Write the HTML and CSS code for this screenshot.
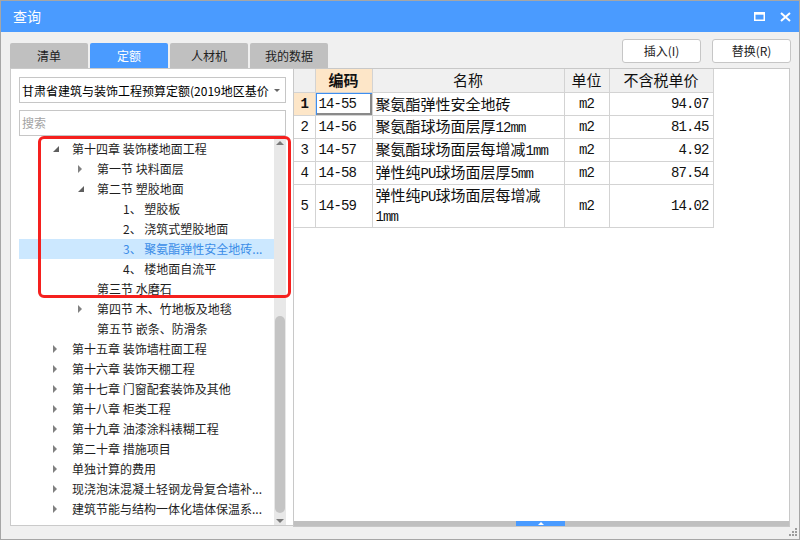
FILE: index.html
```html
<!DOCTYPE html>
<html lang="zh-CN">
<head>
<meta charset="utf-8">
<title>查询</title>
<link rel="stylesheet" href="styles.css">
</head>
<body>
<div class="window">
  <div class="titlebar">
    <span class="title">查询</span>
    <div class="ctrls">
      <svg width="11" height="9" viewBox="0 0 11 9"><path d="M0.75 1.5 H10.25 V8.25 H0.75 Z" fill="none" stroke="#fff" stroke-width="1.5"/><rect x="0" y="0" width="11" height="2.6" fill="#fff"/></svg>
      <svg width="11" height="10" viewBox="0 0 11 10"><path d="M1 1 L10 9 M10 1 L1 9" stroke="#fff" stroke-width="2"/></svg>
    </div>
  </div>

  <div class="toolbar">
    <div class="tabs">
      <div class="tab">清单</div>
      <div class="tab active">定额</div>
      <div class="tab">人材机</div>
      <div class="tab">我的数据</div>
    </div>
    <div class="btns">
      <div class="btn">插入(I)</div>
      <div class="btn">替换(R)</div>
    </div>
  </div>

  <div class="main">
    <div class="left">
      <div class="select"><span class="sel-text">甘肃省建筑与装饰工程预算定额(2019地区基价)</span><span class="caret"></span></div>
      <div class="search">搜索</div>
      <div class="tree">
        <div class="rows">
          <div class="row l0"><span class="tw e"></span>第十四章 装饰楼地面工程</div>
          <div class="row l1"><span class="tw c"></span>第一节 块料面层</div>
          <div class="row l1"><span class="tw e"></span>第二节 塑胶地面</div>
          <div class="row l2"><span class="tw"></span>1、 塑胶板</div>
          <div class="row l2"><span class="tw"></span>2、 浇筑式塑胶地面</div>
          <div class="row l2 sel"><span class="tw"></span>3、 聚氨酯弹性安全地砖...</div>
          <div class="row l2"><span class="tw"></span>4、 楼地面自流平</div>
          <div class="row l1"><span class="tw"></span>第三节 水磨石</div>
          <div class="row l1"><span class="tw c"></span>第四节 木、竹地板及地毯</div>
          <div class="row l1"><span class="tw"></span>第五节 嵌条、防滑条</div>
          <div class="row l0"><span class="tw c"></span>第十五章 装饰墙柱面工程</div>
          <div class="row l0"><span class="tw c"></span>第十六章 装饰天棚工程</div>
          <div class="row l0"><span class="tw c"></span>第十七章 门窗配套装饰及其他</div>
          <div class="row l0"><span class="tw c"></span>第十八章 柜类工程</div>
          <div class="row l0"><span class="tw c"></span>第十九章 油漆涂料裱糊工程</div>
          <div class="row l0"><span class="tw c"></span>第二十章 措施项目</div>
          <div class="row l0"><span class="tw c"></span>单独计算的费用</div>
          <div class="row l0"><span class="tw c"></span>现浇泡沫混凝土轻钢龙骨复合墙补...</div>
          <div class="row l0"><span class="tw c"></span>建筑节能与结构一体化墙体保温系...</div>
        </div>
        <div class="vscroll">
          <span class="arrow up"></span>
          <div class="track"><div class="thumb"></div></div>
          <span class="arrow down"></span>
        </div>
      </div>
      <div class="redbox"></div>
    </div>

    <div class="right">
      <div class="grid">
        <table>
          <colgroup><col class="c-no"><col class="c-code"><col class="c-name"><col class="c-unit"><col class="c-price"></colgroup>
          <thead>
            <tr><th class="no"></th><th class="hl">编码</th><th>名称</th><th>单位</th><th>不含税单价</th></tr>
          </thead>
          <tbody>
            <tr><td class="no hl">1</td><td class="code cur">14-55</td><td class="name">聚氨酯弹性安全地砖</td><td class="unit">m2</td><td class="price">94.07</td></tr>
            <tr><td class="no">2</td><td class="code">14-56</td><td class="name">聚氨酯球场面层厚<span class="ln">12mm</span></td><td class="unit">m2</td><td class="price">81.45</td></tr>
            <tr><td class="no">3</td><td class="code">14-57</td><td class="name">聚氨酯球场面层每增减<span class="ln">1mm</span></td><td class="unit">m2</td><td class="price">4.92</td></tr>
            <tr><td class="no">4</td><td class="code">14-58</td><td class="name">弹性纯<span class="ln">PU</span>球场面层厚<span class="ln">5mm</span></td><td class="unit">m2</td><td class="price">87.54</td></tr>
            <tr class="tall"><td class="no">5</td><td class="code">14-59</td><td class="name">弹性纯<span class="ln">PU</span>球场面层每增减<span class="ln">1mm</span></td><td class="unit">m2</td><td class="price">14.02</td></tr>
          </tbody>
        </table>
      </div>
      <div class="splitter"><span class="handle"></span></div>
    </div>
  </div>

  <svg class="grip" width="9" height="9" viewBox="0 0 9 9"><g fill="#9c9c9c"><rect x="6" y="0" width="2" height="2"/><rect x="3" y="3" width="2" height="2"/><rect x="6" y="3" width="2" height="2"/><rect x="0" y="6" width="2" height="2"/><rect x="3" y="6" width="2" height="2"/><rect x="6" y="6" width="2" height="2"/></g></svg>
</div>
</body>
</html>
```

FILE: styles.css
```css
* { box-sizing: border-box; }
html, body { margin: 0; padding: 0; }
body {
  width: 800px;
  height: 540px;
  overflow: hidden;
  background: #f0f0f0;
  font-family: "Noto Sans CJK SC", "Microsoft YaHei", sans-serif;
}

.window {
  position: relative;
  width: 800px;
  height: 540px;
  border: 1px solid #a6a6a6;
  background: #f0f0f0;
  display: flex;
  flex-direction: column;
}

/* title bar */
.titlebar {
  flex: none;
  height: 31px;
  background: #4a9bff;
  color: #fff;
  display: flex;
  align-items: center;
  justify-content: space-between;
  padding: 0 8px 0 12px;
}
.title { font-size: 14px; line-height: 31px; }
.ctrls { display: flex; align-items: center; gap: 15px; }
.ctrls svg { display: block; }

/* toolbar */
.toolbar {
  flex: none;
  height: 36px;
  display: flex;
  justify-content: space-between;
  padding: 0 8px 0 9px;
}
.tabs { display: flex; gap: 2px; align-self: flex-end; }
.tab {
  width: 78px;
  height: 25px;
  background: #c0c0c0;
  border-radius: 2px 2px 0 0;
  font-size: 12px;
  line-height: 25px;
  text-align: center;
  color: #222;
}
.tab.active { background: #4a9bff; color: #fff; }
.btns { display: flex; gap: 11px; padding-top: 7px; }
.btn {
  width: 79px;
  height: 24px;
  background: #fff;
  border: 1px solid #c6c6c6;
  border-radius: 3px;
  font-size: 12px;
  line-height: 22px;
  text-align: center;
  color: #222;
}

/* main area */
.main {
  flex: 1;
  display: flex;
  align-items: flex-start;
  padding: 0 8px 0 9px;
}
.left {
  position: relative;
  width: 283px;
  height: 458px;
  border: 1px solid #cacaca;
  border-right: none;
  background: #fff;
  display: flex;
  flex-direction: column;
  padding: 8px 7px 0 8px;
}
.select {
  flex: none;
  height: 26px;
  border: 1px solid #c6c6c6;
  display: flex;
  align-items: center;
  padding-left: 2px;
}
.sel-text {
  flex: 1;
  overflow: hidden;
  white-space: nowrap;
  font-size: 12px;
  color: #000;
}
.caret {
  flex: none;
  width: 16px;
  display: flex;
  justify-content: center;
  align-items: center;
}
.caret::before {
  content: "";
  border-top: 3px solid #666;
  border-left: 3px solid transparent;
  border-right: 3px solid transparent;
}
.search {
  flex: none;
  height: 26px;
  margin-top: 7px;
  border: 1px solid #c6c6c6;
  padding-left: 2px;
  font-size: 12px;
  line-height: 24px;
  color: #a3a3a3;
}

/* tree */
.tree {
  flex: 1;
  min-height: 0;
  margin-top: 3px;
  display: flex;
}
.rows { flex: 1; overflow: hidden; }
.row {
  height: 20px;
  line-height: 20px;
  font-size: 12px;
  color: #1e1e1e;
  white-space: nowrap;
  display: flex;
  align-items: center;
}
.row.l0 { padding-left: 34px; }
.row.l1 { padding-left: 59px; }
.row.l2 { padding-left: 85px; }
.row.sel { background: #cce8ff; color: #3b8de8; }
.tw { flex: none; width: 19px; height: 20px; position: relative; }
.tw.c::before {
  content: "";
  position: absolute;
  left: 0;
  top: 6px;
  border-left: 4px solid #808080;
  border-top: 4px solid transparent;
  border-bottom: 4px solid transparent;
}
.tw.e::before {
  content: "";
  position: absolute;
  left: 0;
  top: 7px;
  border-bottom: 6px solid #5f5f5f;
  border-left: 6px solid transparent;
}

.vscroll {
  flex: none;
  width: 12px;
  background: #e8e8e8;
  display: flex;
  flex-direction: column;
  align-items: center;
}
.arrow { flex: none; height: 12px; width: 12px; display: flex; justify-content: center; }
.arrow.up { align-items: flex-start; padding-top: 2px; }
.arrow.down { align-items: flex-end; padding-bottom: 2px; }
.arrow.up::before {
  content: "";
  border-bottom: 4px solid #7a7a7a;
  border-left: 4px solid transparent;
  border-right: 4px solid transparent;
}
.arrow.down::before {
  content: "";
  border-top: 4px solid #7a7a7a;
  border-left: 4px solid transparent;
  border-right: 4px solid transparent;
}
.track { flex: 1; width: 12px; display: flex; justify-content: center; }
.thumb {
  width: 10px;
  height: 197px;
  margin-top: 165px;
  background: #c4c4c4;
  border-radius: 5px;
}

.redbox {
  position: absolute;
  left: 27px;
  top: 67px;
  width: 253px;
  height: 162px;
  border: 3px solid #f5201e;
  border-radius: 6px;
}

/* right panel */
.right {
  width: 497px;
  height: 459px;
  border: 1px solid #c8c8c8;
  background: #fff;
  display: flex;
  flex-direction: column;
}
.grid { flex: 1; overflow: hidden; }
table {
  border-collapse: collapse;
  table-layout: fixed;
  width: 419px;
}
col.c-no { width: 21px; }
col.c-code { width: 57px; }
col.c-name { width: 192px; }
col.c-unit { width: 45px; }
col.c-price { width: 104px; }
th, td {
  border: 1px solid #d3d3d3;
  height: 23px;
  padding: 0 3px;
  font-size: 15px;
  line-height: 18px;
  font-weight: normal;
  color: #111;
  white-space: normal;
  overflow: hidden;
}
th { background: #f0f0f0; border-top: none; text-align: center; }
th:first-child, td:first-child { border-left: none; }
.hl { background: #fde6c8; font-weight: bold; }
td.no { text-align: center; padding: 0; }
td.no, td.code, td.unit, td.price {
  font-family: "Liberation Mono", "DejaVu Sans Mono", monospace;
  font-size: 14px;
  letter-spacing: -0.9px;
}
td.unit { text-align: center; }
td.price { text-align: right; padding-right: 4px; }
td.name { padding-left: 3px; padding-right: 2px; }
.ln {
  font-family: "Liberation Mono", "DejaVu Sans Mono", monospace;
  font-size: 14px;
  letter-spacing: -0.9px;
}
tr.tall td { height: 39px; padding-top: 1px; padding-bottom: 1px; }
td.cur { box-shadow: inset 1px 1px 0 #3d8ef0, inset -2px -2px 0 #8a8a8a; }

.splitter {
  flex: none;
  height: 5px;
  background: #c0c0c0;
  display: flex;
}
.handle {
  margin-left: 222px;
  width: 49px;
  height: 5px;
  background: #4a9bff;
  display: flex;
  justify-content: center;
  align-items: flex-end;
  padding-bottom: 1px;
}
.handle::before {
  content: "";
  border-bottom: 3px solid #fff;
  border-left: 3px solid transparent;
  border-right: 3px solid transparent;
}

.grip {
  position: absolute;
  right: 1px;
  bottom: 2px;
}
```
